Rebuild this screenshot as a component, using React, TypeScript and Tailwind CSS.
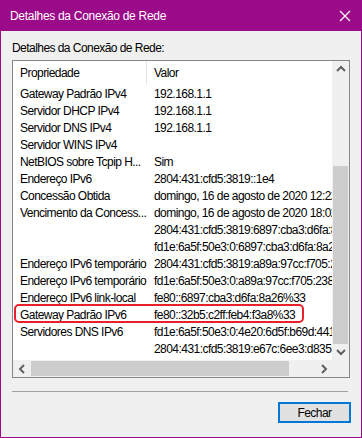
const rows: [string, string][] = [
  ["Gateway Padrão IPv4", "192.168.1.1"],
  ["Servidor DHCP IPv4", "192.168.1.1"],
  ["Servidor DNS IPv4", "192.168.1.1"],
  ["Servidor WINS IPv4", ""],
  ["NetBIOS sobre Tcpip H...", "Sim"],
  ["Endereço IPv6", "2804:431:cfd5:3819::1e4"],
  ["Concessão Obtida", "domingo, 16 de agosto de 2020 12:22:41"],
  ["Vencimento da Concess...", "domingo, 16 de agosto de 2020 18:02:41"],
  ["", "2804:431:cfd5:3819:6897:cba3:d6fa:8a26"],
  ["", "fd1e:6a5f:50e3:0:6897:cba3:d6fa:8a26"],
  ["Endereço IPv6 temporário", "2804:431:cfd5:3819:a89a:97cc:f705:238d"],
  ["Endereço IPv6 temporário", "fd1e:6a5f:50e3:0:a89a:97cc:f705:238d"],
  ["Endereço IPv6 link-local", "fe80::6897:cba3:d6fa:8a26%33"],
  ["Gateway Padrão IPv6", "fe80::32b5:c2ff:feb4:f3a8%33"],
  ["Servidores DNS IPv6", "fd1e:6a5f:50e3:0:4e20:6d5f:b69d:4419"],
  ["", "2804:431:cfd5:3819:e67c:6ee3:d835:f1a2"],
];

function Chevron({ dir }: { dir: "up" | "down" | "left" | "right" }) {
  const d = {
    up: "M1 6 L5 2 L9 6",
    down: "M1 2 L5 6 L9 2",
    left: "M6 1 L2 5 L6 9",
    right: "M2 1 L6 5 L2 9",
  }[dir];
  const vertical = dir === "up" || dir === "down";
  return (
    <svg
      width={vertical ? 10 : 8}
      height={vertical ? 8 : 10}
      viewBox={vertical ? "0 0 10 8" : "0 0 8 10"}
    >
      <path d={d} fill="none" stroke="#606060" strokeWidth="2" />
    </svg>
  );
}

export default function App() {
  return (
    <div
      className="w-[362px] h-[438px] flex flex-col bg-[#9b0a89] px-px pb-px text-[12px] tracking-[-0.55px] text-black"
      style={{ fontFamily: '"Liberation Sans", Arial, sans-serif' }}
    >
      {/* Barra de título */}
      <div className="h-[31px] flex items-center justify-between pl-[9px] pr-[10px] text-white tracking-[-0.3px]">
        <span>Detalhes da Conexão de Rede</span>
        <svg width="12" height="12" viewBox="0 0 12 12">
          <path d="M1 1 L11 11 M11 1 L1 11" stroke="white" strokeWidth="1.2" />
        </svg>
      </div>

      <div className="flex-1 bg-[#f0f0f0] px-[11px] flex flex-col">
        <div className="h-[29px] flex items-end pb-[3px]">Detalhes da Conexão de Rede:</div>

        {/* Lista */}
        <div className="w-[338px] h-[318px] border border-[#828790] bg-white flex flex-col">
          <div className="flex flex-1 min-h-0">
            <div className="flex-1 overflow-hidden whitespace-nowrap">
              <div className="h-[24px] flex items-center">
                <div className="w-[134px] pl-[7px] h-full flex items-center border-r border-[#e5e5e5]">
                  Propriedade
                </div>
                <div className="pl-[7px]">Valor</div>
              </div>
              {rows.map(([k, v], i) => (
                <div key={i} className="relative h-[17px] flex items-center">
                  <div className="w-[135px] pl-[7px] shrink-0 overflow-hidden">{k}</div>
                  <div className="pl-[6px] shrink-0">{v}</div>
                  {i === 13 && (
                    <div className="absolute left-px top-[-2px] w-[290px] h-[19px] border-2 border-[#e8202a] rounded-[5px]" />
                  )}
                </div>
              ))}
            </div>
            {/* Barra de rolagem vertical */}
            <div className="w-[17px] bg-[#f0f0f0] flex flex-col items-center">
              <div className="h-[17px] flex items-center justify-center">
                <Chevron dir="up" />
              </div>
              <div className="flex-1 w-full flex flex-col">
                <div className="h-[89px]" />
                <div className="h-[178px] mx-px bg-[#cdcdcd]" />
                <div className="flex-1" />
              </div>
              <div className="h-[17px] flex items-center justify-center">
                <Chevron dir="down" />
              </div>
            </div>
          </div>
          {/* Barra de rolagem horizontal */}
          <div className="h-[17px] flex">
            <div className="flex-1 bg-[#f0f0f0] flex items-center">
              <div className="w-[17px] flex justify-center">
                <Chevron dir="left" />
              </div>
              <div className="w-[258px] h-[15px] ml-px bg-[#cdcdcd]" />
              <div className="flex-1" />
              <div className="w-[17px] flex justify-center">
                <Chevron dir="right" />
              </div>
            </div>
            <div className="w-[17px] bg-[#f0f0f0]" />
          </div>
        </div>

        <div className="mt-[13px] w-[336px] h-px bg-[#a0a0a0]" />

        <div className="flex justify-end mt-[10px]">
          <button className="w-[73px] h-[21px] border-2 border-[#0078d7] bg-[#e1e1e1] flex items-center justify-center mr-[-1px]">
            Fechar
          </button>
        </div>
      </div>
    </div>
  );
}
